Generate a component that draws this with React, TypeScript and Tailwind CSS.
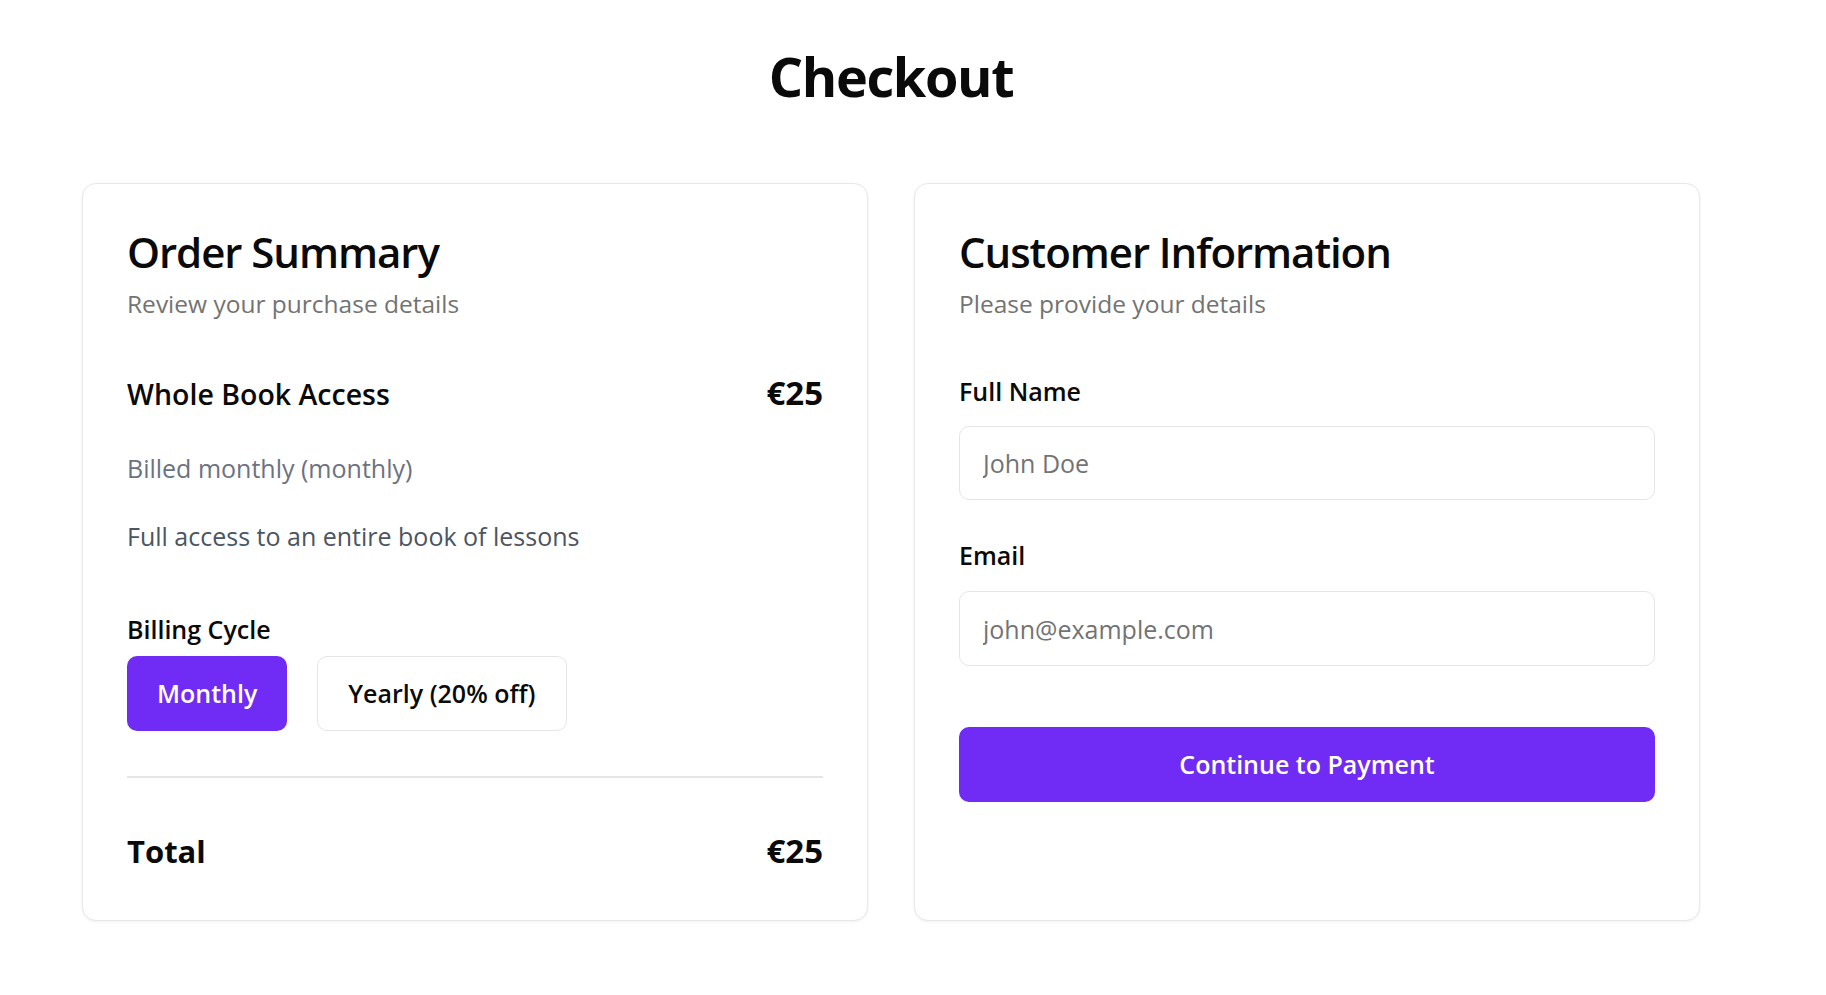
import { useState } from 'react'

const font = { fontFamily: '"Open Sans", "Noto Sans", Arial, sans-serif' }

export default function App() {
  const [cycle, setCycle] = useState<'monthly' | 'yearly'>('monthly')

  return (
    <main className="min-h-screen bg-white text-[#0a0a0a]" style={font}>
      <div className="ml-[82px] w-[1618px] pt-[44px]">
        {/* Page title */}
        <h1 className="text-center text-[54px] font-bold leading-[64px] tracking-tight">Checkout</h1>

        <div className="mt-[75px] grid grid-cols-2 gap-[46px]">
          {/* Order summary */}
          <section className="rounded-[14px] border border-[#e7e7e7] bg-white px-[44px] pt-[47px] pb-[49px] shadow-[0_1px_3px_rgba(0,0,0,0.06)]">
            <h2 className="text-[42px] font-semibold leading-[42px] tracking-tight">Order Summary</h2>
            <p className="mt-[15px] text-[24.5px] leading-[32px] text-[#737373]">Review your purchase details</p>

            <div className="mt-[55px] flex items-baseline justify-between">
              <h3 className="text-[28.5px] font-semibold leading-[36px]">Whole Book Access</h3>
              <span className="text-[33px] font-bold leading-[36px]">€25</span>
            </div>
            <p className="mt-[40px] text-[25px] leading-[32px] text-[#6b7280]">Billed monthly (monthly)</p>
            <p className="mt-[36px] text-[25px] leading-[32px] text-[#4b5563]">Full access to an entire book of lessons</p>

            <p className="mt-[61px] text-[25px] font-semibold leading-[32px]">Billing Cycle</p>
            <div className="mt-[11px] flex gap-[30px]">
              <button
                onClick={() => setCycle('monthly')}
                className={
                  cycle === 'monthly'
                    ? 'h-[75px] rounded-[10px] bg-[#702cf5] px-[30px] text-[25px] font-semibold text-white'
                    : 'h-[75px] rounded-[10px] border border-[#e5e5e5] bg-white px-[30px] text-[25px] font-semibold text-[#0a0a0a]'
                }
              >
                Monthly
              </button>
              <button
                onClick={() => setCycle('yearly')}
                className={
                  cycle === 'yearly'
                    ? 'h-[75px] rounded-[10px] bg-[#702cf5] px-[30px] text-[25px] font-semibold text-white'
                    : 'h-[75px] rounded-[10px] border border-[#e5e5e5] bg-white px-[30px] text-[25px] font-semibold text-[#0a0a0a]'
                }
              >
                Yearly (20% off)
              </button>
            </div>

            <div className="mt-[45px] h-[2px] bg-[#e5e5e5]" />

            <div className="mt-[53px] flex items-baseline justify-between">
              <span className="text-[31px] font-bold leading-[40px]">Total</span>
              <span className="text-[33px] font-bold leading-[40px]">€25</span>
            </div>
          </section>

          {/* Customer info */}
          <section className="rounded-[14px] border border-[#e7e7e7] bg-white px-[44px] pt-[47px] pb-[49px] shadow-[0_1px_3px_rgba(0,0,0,0.06)]">
            <h2 className="text-[42px] font-semibold leading-[42px] tracking-tight">Customer Information</h2>
            <p className="mt-[15px] text-[24.5px] leading-[32px] text-[#737373]">Please provide your details</p>

            <label className="mt-[55px] block text-[25px] font-semibold leading-[32px]">Full Name</label>
            <input
              placeholder="John Doe"
              className="mt-[19px] block h-[74px] w-full rounded-[10px] border border-[#e5e5e5] px-[23px] text-[25px] outline-none placeholder:text-[#737373]"
            />

            <label className="mt-[39px] block text-[25px] font-semibold leading-[32px]">Email</label>
            <input
              placeholder="john@example.com"
              className="mt-[20px] block h-[75px] w-full rounded-[10px] border border-[#e5e5e5] px-[23px] text-[25px] outline-none placeholder:text-[#737373]"
            />

            <button className="mt-[61px] h-[75px] w-full rounded-[10px] bg-[#702cf5] text-[25px] font-semibold text-white">
              Continue to Payment
            </button>
          </section>
        </div>
      </div>
    </main>
  )
}
